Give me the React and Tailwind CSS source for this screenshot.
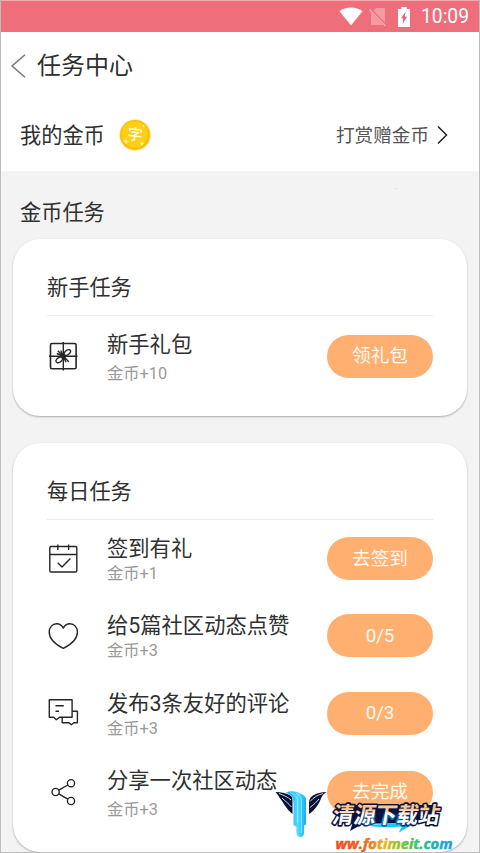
const StatusBar = () => (
  <div className="flex h-8 items-center justify-end border-t border-[#f3a9b1] bg-[#ee6f7b] pr-[10px] text-white">
    <svg className="mr-[6px] h-[19px] w-6" viewBox="0 0 24 19" fill="currentColor">
      <path d="M12 18.5 0.5 4.2C3.8 1.6 7.8 0.4 12 0.4s8.2 1.2 11.5 3.8z" />
    </svg>
    <svg className="mr-[10px] h-5 w-[18px]" viewBox="0 0 18 20" fill="none">
      <path d="M7 1h9v17H2V6z" fill="#f49aa3" />
      <path d="M0.5 1.5 17 19" stroke="#ee6f7b" strokeWidth="3" />
      <path d="M0.5 2.5 16.5 19" stroke="#f7a9b1" strokeWidth="1.4" />
    </svg>
    <svg className="mr-[10px] h-5 w-[14px]" viewBox="0 0 14 20">
      <path d="M4.3 0h5.4v2H13v18H1V2h3.3z" fill="currentColor" />
      <path d="M8.6 4.8 4 11.3h2.4l-1 5.6 4.7-7.2H7.6z" fill="#dd5f72" />
    </svg>
    <span className="font-[Roboto,sans-serif] text-[19.3px] leading-none">10:09</span>
  </div>
);

const Coin = () => (
  <svg className="ml-[14px] h-8 w-8" viewBox="0 0 32 32">
    <circle cx="16" cy="16" r="15.8" fill="#ffe98a" />
    <circle cx="16" cy="16" r="15" fill="#f9bb10" />
    <circle cx="15.6" cy="15.4" r="13.2" fill="#fdcf16" />
    <text
      x="16"
      y="21"
      textAnchor="middle"
      fontSize="15"
      fontWeight="500"
      fill="#fffbe2"
      fontFamily="'Noto Sans CJK SC', sans-serif"
      transform="rotate(7 16 16)"
    >
      字
    </text>
    <path
      d="M7 19.4l.9 2 2 .9-2 .9-.9 2-.9-2-2-.9 2-.9zM24.5 5.5l.5 1 1 .5-1 .5-.5 1-.5-1-1-.5 1-.5zM23 22.5l.7 1.5 1.5.7-1.5.7-.7 1.5-.7-1.5-1.5-.7 1.5-.7z"
      fill="#fff3a0"
    />
  </svg>
);

const iconProps = {
  className: 'h-8 w-8',
  viewBox: '0 0 32 32',
  fill: 'none',
  stroke: '#262626',
  strokeWidth: 1.4,
  strokeLinejoin: 'round',
};

const GiftIcon = () => (
  <svg {...iconProps}>
    <rect x="3.5" y="3.5" width="25.6" height="25.3" rx="1.5" strokeWidth="1.6" />
    <path d="M16.3 2V30.5M2 16.2H30.5" />
    <path d="M16.3 16.2c0-3.5 3-7 6-6.500 3 .8 1 5.700-6 6.500zM16.3 16.2c0 3.500-3 7-6 6.500-3-.8-1-5.700 6-6.500z" />
    <path d="M10.8 10.8l11 11M13.800 10.500l2.500 5.700 2.700 6M9.800 13.500l6.500 2.700" strokeWidth="1.4" />
    <circle cx="16.3" cy="16.2" r="2.6" fill="#262626" stroke="none" />
  </svg>
);

const CalendarIcon = () => (
  <svg {...iconProps}>
    <rect x="2.8" y="3.5" width="27" height="25.5" rx="1.2" />
    <path d="M2.8 11.5h27M10.8 1.5V7M21.6 1.5V7M10.7 19.8l4.3 4.3 8.4-8.6" />
  </svg>
);

const HeartIcon = () => (
  <svg {...iconProps}>
    <path d="M16.3 28.4C7.8 24.3 2.2 18.6 2.2 12.1 2.2 7.3 5.3 3.8 9.5 3.8c3.2 0 5.5 1.6 6.8 4.3C17.6 5.4 19.9 3.8 23.1 3.8c4.2 0 7.3 3.5 7.3 8.3 0 6.5-5.6 12.2-14.1 16.3z" />
  </svg>
);

const CommentIcon = () => (
  <svg {...iconProps}>
    <path d="M2.3 2.8h22.8v17.4H12.5l-3.2 2.6-2.6-2.6H2.3z" />
    <path d="M25.1 14.3h5.3v11.5h-3.6l-2.5 2-2.3-2h-6.8v-5.6M8.5 8.8h8.3M8.5 14.2h3.5" />
  </svg>
);

const ShareIcon = () => (
  <svg {...iconProps}>
    <circle cx="8.6" cy="16" r="3.6" />
    <circle cx="24" cy="7.2" r="3.6" />
    <circle cx="24" cy="25" r="3.6" />
    <path d="M11.8 14.2 20.9 9M11.8 17.8l9 5.4" />
  </svg>
);

const newbieTasks = [
  { id: 1, icon: GiftIcon, title: '新手礼包', reward: '金币+10', action: '领礼包', height: 'h-[80px]', gap: 'gap-[10px]' },
];

const dailyTasks = [
  { id: 1, icon: CalendarIcon, title: '签到有礼', reward: '金币+1', action: '去签到', height: 'h-[77px]', gap: 'gap-[6px]' },
  { id: 2, icon: HeartIcon, title: '给5篇社区动态点赞', reward: '金币+3', action: '0/5', height: 'h-[77px]', gap: 'gap-[6px]' },
  { id: 3, icon: CommentIcon, title: '发布3条友好的评论', reward: '金币+3', action: '0/3', height: 'h-[78px]', gap: 'gap-[6px]' },
  { id: 4, icon: ShareIcon, title: '分享一次社区动态', reward: '金币+3', action: '去完成', height: 'h-[80px]', gap: 'gap-[10px]' },
];

const TaskRow = ({ task }) => {
  const Icon = task.icon;
  return (
    <div className={`flex items-center ${task.height}`}>
      <Icon />
      <div className={`ml-7 flex flex-1 flex-col whitespace-nowrap pt-[3px] ${task.gap}`}>
        <span className="text-[21.3px] leading-[21px] text-[#303030]">{task.title}</span>
        <span className="text-[16.3px] leading-[17px] text-[#999]">{task.reward}</span>
      </div>
      <button className="h-[43px] w-[106px] rounded-full bg-[#ffb071] pt-px text-[18.7px] text-[#fffaf0]">
        {task.action}
      </button>
    </div>
  );
};

const TaskCard = ({ title, tasks, className }) => (
  <div className={`mx-3 rounded-[27px] bg-white px-[34px] shadow-[0_1px_2px_rgba(0,0,0,0.3)] ${className}`}>
    <h3 className="flex h-[77px] items-center border-b border-[#ebebeb] pt-[22px] text-[21.2px] text-[#303030]">
      {title}
    </h3>
    {tasks.map((task) => (
      <TaskRow key={task.id} task={task} />
    ))}
  </div>
);

const Watermark = () => (
  <svg className="absolute bottom-0 right-[20px] h-[65px] w-[185px]" viewBox="275 788 185 65">
    <defs>
      <linearGradient id="url" x1="0" x2="1">
        <stop offset="0" stopColor="#ee4a22" />
        <stop offset="0.24" stopColor="#f0601c" />
        <stop offset="0.42" stopColor="#edb51c" />
        <stop offset="0.6" stopColor="#62c838" />
        <stop offset="0.78" stopColor="#1fbd98" />
        <stop offset="1" stopColor="#2497ee" />
      </linearGradient>
      <linearGradient id="beam" x1="0" x2="1">
        <stop offset="0" stopColor="#18a4f2" />
        <stop offset="0.6" stopColor="#4fdcff" />
        <stop offset="1" stopColor="#16aef5" />
      </linearGradient>
      <linearGradient id="name" x1="0" y1="0" x2="0" y2="1">
        <stop offset="0.4" stopColor="#ffc795" />
        <stop offset="0.56" stopColor="#ffffff" />
      </linearGradient>
      <radialGradient id="glow" cx="0.5" cy="0.75" r="0.3">
        <stop offset="0" stopColor="#12a9f5" />
        <stop offset="0.4" stopColor="#0868b8" />
        <stop offset="1" stopColor="#07123e" />
      </radialGradient>
    </defs>
    <path d="M276.5 793c6 .2 11 1 15 3.5 1.7 1 2 2.5 2 4.5v14C288 811 283.5 802 276.5 793z" fill="#0b1238" />
    <path d="M280 794.5c5 2 9 3.5 12 6.5M283 799c3 3 6.5 5.5 9.5 9" stroke="#fff" strokeWidth="0.8" fill="none" />
    <path d="M327.5 793c-5.500.2-10 1.200-13.500 3.500-3 2-4 4-4 7V815c6-4 10-10 12-15.500 1-3 3-5 5.500-6.500z" fill="#0b1238" />
    <path d="M324 794.5c-5.500 1.500-9.500 4-13 8M320 800c-2.500 3-5 5.500-9 8.500" stroke="#fff" strokeWidth="0.8" fill="none" />
    <path d="M287 793.500c5-2 10-1.500 14 1 2.500.5 5 2.500 6 5v26l-2 1v7.500c0 5.500-7 5.500-7.500 0V828l-3-2v-22c0-5-2.500-8-7.500-10.500z" fill="url(#beam)" />
    <path d="M291 793.8c4.500 1 7.500 4 7.500 8V824M297 794.5c4 1.500 5.500 4 5.500 8V834" stroke="#b6f5ff" strokeWidth="0.6" fill="none" />
    <path d="M340 806h98l-6 16-12 2-72 1z" fill="#07123e" />
    <path d="M351 832 354 823h13z" fill="#07123e" />
    <path d="M362 825c22 1.500 43-1 59-3.500-7 4-13 7-21 12 1-3 2-4 3-6-13 1.500-30 1-41-2.500z" fill="#1bc8f5" />
    <text
      transform="translate(332.5 823.5) skewX(-10)"
      textLength="107"
      lengthAdjust="spacingAndGlyphs"
      fontSize="22.5"
      fontWeight="700"
      fontFamily="'Noto Sans CJK SC', sans-serif"
      fill="url(#name)"
      stroke="url(#glow)"
      strokeWidth="3.2"
      strokeLinejoin="round"
      paintOrder="stroke"
    >
      清源下载站
    </text>
    <text
      x="336.5"
      y="849.5"
      textLength="117"
      lengthAdjust="spacingAndGlyphs"
      fontSize="15"
      fontWeight="700"
      fontStyle="italic"
      fontFamily="'Open Sans', sans-serif"
      fill="url(#url)"
      stroke="url(#url)"
      strokeWidth="0.5"
    >
      ww.fotimeit.com
    </text>
  </svg>
);

export default function App() {
  return (
    <div className="relative flex h-[853px] w-[480px] flex-col overflow-hidden border-x border-b border-[#bdbdbd] bg-[#f3f3f3] font-[Roboto,'Noto_Sans_CJK_SC',sans-serif]">
      <StatusBar />
      <header className="flex h-[67px] items-center bg-white pl-[9px]">
        <svg className="h-6 w-4" viewBox="0 0 16 24" fill="none" stroke="#777" strokeWidth="1.5">
          <path d="M15 0.7 2 12l13 11.3" />
        </svg>
        <h1 className="ml-[11px] pt-px text-[24px] text-[#303030]">任务中心</h1>
      </header>
      <div className="flex h-[72px] items-center bg-white pl-[19px]">
        <span className="pt-px text-[21.2px] text-[#303030]">我的金币</span>
        <Coin />
        <span className="ml-auto pt-[3px] text-[18.6px] text-[#555]">打赏赠金币</span>
        <svg className="ml-[8px] mr-[31px] h-5 w-[11px]" viewBox="0 0 11 20" fill="none" stroke="#222" strokeWidth="1.5">
          <path d="M1 1.5 9.5 10 1 18.5" />
        </svg>
      </div>
      <div className="flex h-[68px] items-center pl-[19px] pt-[16px]">
        <h2 className="text-[21.2px] text-[#303030]">金币任务</h2>
        <span className="mb-[50px] ml-[290px] h-px w-[2px] bg-[#eee39a]" />
      </div>
      <TaskCard title="新手任务" tasks={newbieTasks} className="h-[177px]" />
      <TaskCard title="每日任务" tasks={dailyTasks} className="mt-[27px] h-[409px] shrink-0" />
      <Watermark />
    </div>
  );
}
